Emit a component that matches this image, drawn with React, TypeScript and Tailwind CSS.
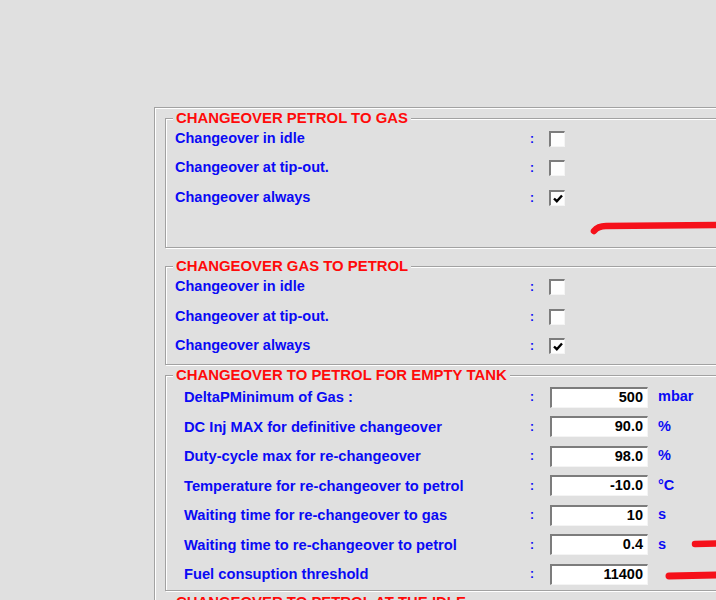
import React from 'react'

interface CheckRowProps {
  label: string
  checked?: boolean
}

interface ValueRowProps {
  label: string
  value: string
  unit?: string
}

function Checkbox({ checked }: { checked?: boolean }) {
  return (
    <div className="flex h-[16px] w-[16px] items-center justify-center border-t-2 border-l-2 border-r border-b border-t-[#7c7c7c] border-l-[#7c7c7c] border-r-[#f4f4f4] border-b-[#f4f4f4] bg-[#fdfdfd]">
      {checked && (
        <svg width="10" height="9" viewBox="0 0 10 9">
          <path d="M1 4.5 L3.8 7.2 L9 1.5" fill="none" stroke="#000" strokeWidth="2.4" />
        </svg>
      )}
    </div>
  )
}

function CheckRow({ label, checked }: CheckRowProps) {
  return (
    <div className="flex h-[29.5px] items-center">
      <span className="w-[355px] text-[14.5px] font-bold text-[#0a0af5]">{label}</span>
      <span className="w-[19px] text-[12px] font-bold text-[#0a0af5]">:</span>
      <Checkbox checked={checked} />
    </div>
  )
}

function ValueRow({ label, value, unit }: ValueRowProps) {
  return (
    <div className="flex h-[29.5px] items-center">
      <span className="w-[346px] text-[14.7px] font-bold text-[#0a0af5]">{label}</span>
      <span className="w-[20px] text-[12px] font-bold text-[#0a0af5]">:</span>
      <div className="flex h-[21px] w-[98px] items-center justify-end border-t-2 border-l-2 border-r border-b border-t-[#7c7c7c] border-l-[#7c7c7c] border-r-[#f4f4f4] border-b-[#f4f4f4] bg-white pr-[4px] text-[14.5px] font-bold text-black">
        {value}
      </div>
      <span className="ml-[10px] text-[14.5px] font-bold text-[#0a0af5]">{unit}</span>
    </div>
  )
}

function Group({
  title,
  children,
  className,
  legendClass,
}: {
  title: string
  children?: React.ReactNode
  className: string
  legendClass: string
}) {
  return (
    <fieldset
      className={
        'w-full border border-[#a2a2a2] shadow-[inset_1px_1px_0_#ffffff,1px_1px_0_#ffffff] ' + className
      }
    >
      <legend
        className={
          'bg-[#e0e0e0] px-[3px] text-[14.9px] leading-[16px] font-bold text-[#ff0a0a] ' + legendClass
        }
      >
        {title}
      </legend>
      {children}
    </fieldset>
  )
}

export default function App() {
  return (
    <div className="relative h-[600px] w-[716px] overflow-hidden bg-[#e0e0e0] font-['Liberation_Sans',Arial,sans-serif]">
      <div className="pl-[154px] pt-[107px]">
        <div className="flex w-[640px] flex-col border-t border-l border-[#a2a2a2] pl-[10px] pt-[2px] shadow-[inset_1px_1px_0_#ffffff]">
          <Group title="CHANGEOVER PETROL TO GAS" className="h-[138px] pl-[9px]" legendClass="-ml-[2px]">
            <div className="-mt-[2px]">
              <CheckRow label="Changeover in idle" />
              <CheckRow label="Changeover at tip-out." />
              <CheckRow label="Changeover always" checked />
            </div>
          </Group>
          <Group title="CHANGEOVER GAS TO PETROL" className="mt-[10px] pl-[9px] pb-[3px]" legendClass="-ml-[2px]">
            <div className="-mt-[1.5px]">
              <CheckRow label="Changeover in idle" />
              <CheckRow label="Changeover at tip-out." />
              <CheckRow label="Changeover always" checked />
            </div>
          </Group>
          <Group
            title="CHANGEOVER TO PETROL FOR EMPTY TANK"
            className="mt-[2px] pl-[18px] pb-[1px]"
            legendClass="-ml-[11px]"
          >
            <div className="-mt-[0.5px]">
              <ValueRow label="DeltaPMinimum of Gas :" value="500" unit="mbar" />
              <ValueRow label="DC Inj MAX for definitive changeover" value="90.0" unit="%" />
              <ValueRow label="Duty-cycle max for re-changeover" value="98.0" unit="%" />
              <ValueRow label="Temperature for re-changeover to petrol" value="-10.0" unit="°C" />
              <ValueRow label="Waiting time for re-changeover to gas" value="10" unit="s" />
              <ValueRow label="Waiting time to re-changeover to petrol" value="0.4" unit="s" />
              <ValueRow label="Fuel consuption threshold" value="11400" />
            </div>
          </Group>
          <Group
            title="CHANGEOVER TO PETROL AT THE IDLE"
            className="mt-[3px] h-[60px] pl-[18px]"
            legendClass="-ml-[11px]"
          />
        </div>
      </div>
      <svg className="pointer-events-none absolute top-0 left-0" width="716" height="600" viewBox="0 0 716 600">
        <path d="M594 231 Q598 226 606 226 L716 225" fill="none" stroke="#f5101a" strokeWidth="6.5" strokeLinecap="round" />
        <path d="M695 544 L716 543.5" fill="none" stroke="#f5101a" strokeWidth="6.5" strokeLinecap="round" />
        <path d="M669 576 L716 575" fill="none" stroke="#f5101a" strokeWidth="7" strokeLinecap="round" />
      </svg>
    </div>
  )
}
